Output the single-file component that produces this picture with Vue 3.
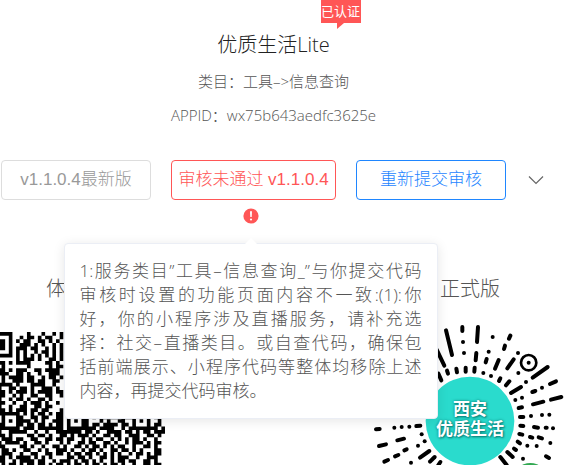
<script setup>
const reviewLines = [
  '1:服务类目”工具–信息查询_”与你提交代码',
  '审核时设置的功能页面内容不一致:(1):你',
  '好，你的小程序涉及直播服务，请补充选',
  '择：社交–直播类目。或自查代码，确保包',
  '括前端展示、小程序代码等整体均移除上述',
  '内容，再提交代码审核。'
]

const qrRows = [
  '####....#...#..#.#',
  '...#..#.##.#.##..#',
  '##.#.#.##..##.#.#.',
  '##.#..###.#.#..#.#',
  '##.#.###.##..#.#.#',
  '...#.#.#..#.##.#.#',
  '####.#.#.#.#.#.#.#',
  '.....#.###.#..##.#',
  '##.#.####....##.#.',
  '.#......#.....#.##',
  '##.#.###..##.####.',
  '###..##.#..#..###.',
  '.#.####.##..#.##.#',
  '.#..###.##.##..##.',
  '####.#...####..#..',
  '#..##.##.#..###.#.',
  '##.#.###.#.####.##',
  '##..#.#..##..##..#',
  '#..#.##.#..##.#...',
  '##..#..#.###.#..#.',
  '#..#..##..##.##...',
  '##.#.###.##.##...#',
  '######.#.#.##.#.##',
  '.#...##..##.##..##.#...##.#.##.##.####...#.##.',
  '.#.#.####.#.#..###.#.#.##...#.#..##..#.#.#..#.',
  '##...##.##.##.#.##.#...##.##.####.##.#...#.##.',
  '######.###.#######.########.####..#.########.#',
  '#..#####..#..#..#######.##.#..####.##.#.##.###',
  '##.#....##.##.#..##.#.###.#..##.##..###..##.#.',
  '.###.##..##..##.##.##..#.#.##..#.#.#.##.#..#..',
  '#.####.#..##.#...#.#..##.##..##.#..#.###.#.##.',
  '##....##.#..#..##.#..##.#.##.#.#.##..#..##.#..',
  '.##.#..##..#.#..###.#..#.##.#..##.##.#.#...##.',
  '.###..#..##..##.##.#.##.##.#.#.#.#..#.##.#.##.',
  '##.#.####.#.#.#....##.##.#..##.#.###..#..###..',
  '##..#.####.##..#.###.#.##.#.#..#.##.##..##.#..',
  '.#.##.#.##.##.#.##.#.##.#.##.#.##.#..#..##.##.'
]
const qrPath = qrRows
  .map((row, y) => [...row.matchAll(/#+/g)].map(m => `M${m.index} ${y}h${m[0].length}v1h-${m[0].length}z`).join(''))
  .join('')

// Rays of the round mini-program code: x1, y1, x2, y2
const rays = [
  [228, 60, 246, 134], [277, 50, 277, 62], [279, 95, 279, 95], [282, 128, 282, 128], [324, 50, 321, 95],
  [368, 80, 368, 80], [421, 76, 417, 85], [405, 106, 402, 116], [356, 124, 356, 124], [319, 128, 317, 150],
  [350, 146, 347, 156], [386, 149, 375, 175], [444, 128, 444, 128], [431, 147, 412, 174], [200, 118, 223, 166],
  [205, 190, 214, 210], [231, 181, 234, 190], [259, 175, 261, 186], [287, 172, 287, 184], [314, 172, 313, 184],
  [340, 188, 340, 188], [363, 197, 363, 197], [391, 204, 387, 212], [418, 213, 408, 225], [445, 188, 445, 188],
  [468, 215, 468, 215], [453, 230, 423, 248], [533, 170, 488, 202], [558, 213, 540, 221], [516, 232, 516, 232],
  [496, 242, 487, 245], [574, 260, 543, 268], [520, 274, 489, 282], [456, 262, 456, 262], [436, 269, 436, 269],
  [456, 291, 446, 293], [460, 320, 450, 320], [483, 317, 483, 317], [516, 314, 516, 314], [538, 313, 538, 313],
  [451, 346, 460, 347], [492, 350, 504, 352], [527, 352, 530, 352], [549, 354, 549, 354], [448, 371, 457, 373],
  [480, 380, 487, 382], [506, 381, 516, 384], [541, 398, 541, 398], [443, 394, 450, 399], [472, 406, 472, 406],
  [500, 407, 500, 407], [459, 445, 459, 445], [528, 438, 537, 443], [432, 415, 438, 419], [412, 425, 428, 440],
  [391, 440, 410, 464], [18, 357, 29, 356], [73, 352, 73, 352], [95, 350, 95, 350], [118, 349, 118, 349],
  [139, 347, 151, 346], [155, 372, 155, 372], [82, 390, 102, 385], [27, 407, 48, 402], [164, 393, 164, 393],
  [144, 406, 144, 406], [103, 420, 110, 417], [75, 438, 85, 434], [43, 454, 54, 449], [178, 422, 150, 442],
  [194, 440, 180, 454], [211, 455, 205, 464], [123, 457, 123, 457]
]
</script>

<template>
  <main class="page">
    <header class="head">
      <span class="tag">已认证</span>
      <h1>优质生活Lite</h1>
      <p>类目：工具–&gt;信息查询</p>
      <p>APPID：wx75b643aedfc3625e</p>
    </header>

    <section class="actions">
      <button class="btn" type="button">v1.1.0.4最新版</button>
      <div class="rejected">
        <button class="btn danger" type="button">审核未通过 v1.1.0.4</button>
        <svg class="warn" viewBox="0 0 16 16" aria-hidden="true">
          <circle cx="8" cy="8" r="7.6" fill="#ff5656" />
          <path d="M7 3.2h2L8.700 9h-1.400z" fill="#fff" />
          <circle cx="8" cy="11.500" r="1.100" fill="#fff" />
        </svg>
        <div class="popover" role="tooltip">
          <span v-for="line in reviewLines" :key="line" class="line">{{ line }}</span>
        </div>
      </div>
      <button class="btn primary" type="button">重新提交审核</button>
      <button class="more" type="button" aria-label="更多">
        <svg viewBox="0 0 16 10"><path d="M1 1.500l7 7 7-7" fill="none" stroke="#666" stroke-width="1.200" /></svg>
      </button>
    </section>

    <section class="codes">
      <figure>
        <figcaption>体验版</figcaption>
        <svg class="qr" viewBox="-3 0 49 49"><path :d="qrPath" /></svg>
      </figure>
      <figure>
        <figcaption>正式版</figcaption>
        <div class="round">
          <svg viewBox="-18 14 636 636">
            <g stroke="#000" stroke-width="12" stroke-linecap="round">
              <line v-for="(r, i) in rays" :key="i" :x1="r[0]" :y1="r[1]" :x2="r[2]" :y2="r[3]" />
            </g>
            <circle cx="476" cy="157" r="23" fill="none" stroke="#000" stroke-width="8" />
            <circle cx="476" cy="157" r="6" />
            <circle cx="300" cy="332" r="133" fill="#2adbcd" />
            <circle cx="481" cy="510" r="52" fill="#32a852" />
          </svg>
          <div class="brand"><span>西安</span><span>优质生活</span></div>
        </div>
      </figure>
    </section>
  </main>
</template>

<style>
body {
  margin: 0;
  background: #fff;
}
</style>

<style scoped>
.page {
  height: 100vh;
  overflow: hidden;
  font-family: "Open Sans", "Noto Sans CJK SC", sans-serif;
  font-weight: 300;
  color: #555;
}
.head {
  position: relative;
  margin-right: 36px;
  padding-top: 30px;
  text-align: center;
}
.head h1 {
  margin: 0 0 6px;
  font-size: 20px;
  line-height: 30px;
  font-weight: 300;
  color: #222;
}
.head p {
  margin: 0 0 4px;
  font-size: 15px;
  line-height: 30px;
}
.tag {
  position: absolute;
  top: 0;
  left: calc(50% + 47px);
  width: 40px;
  font-size: 13px;
  line-height: 23px;
  font-weight: 400;
  white-space: nowrap;
  color: #fff;
  background: #ff5656;
}
.tag::after {
  content: "";
  position: absolute;
  top: 100%;
  left: 16px;
  border-top: 6px solid #ff5656;
  border-right: 7px solid transparent;
}
.actions {
  display: flex;
  justify-content: center;
  align-items: flex-start;
  gap: 20px;
  margin: 30px 36px 0 0;
}
.btn {
  box-sizing: border-box;
  width: 150px;
  height: 40px;
  padding: 0;
  border: 1px solid #ddd;
  border-radius: 4px;
  background: #fff;
  font: 300 17px/38px "Liberation Sans", "Noto Sans CJK SC", sans-serif;
  white-space: nowrap;
  color: #999;
}
.danger {
  width: 165px;
  border-color: #ff5656;
  color: #ff5656;
}
.primary {
  border-color: #1f86ff;
  color: #1f86ff;
}
.more {
  width: 20px;
  height: 40px;
  padding: 0 2px;
  border: 0;
  background: none;
}
.more svg {
  display: block;
  width: 16px;
}
.rejected {
  position: relative;
  display: flex;
  flex-direction: column;
  align-items: center;
  gap: 8px;
}
.warn {
  width: 16px;
  height: 16px;
  margin-right: 6px;
}
.popover {
  position: absolute;
  z-index: 2;
  top: 83px;
  left: 50%;
  box-sizing: border-box;
  width: 374px;
  margin-left: -190px;
  padding: 15px;
  border: 1px solid #ebeef5;
  border-radius: 4px;
  background: #fff;
  box-shadow: 0 2px 12px rgba(0, 0, 0, 0.1);
  font-size: 17px;
  line-height: 24px;
}
.popover::before {
  content: "";
  position: absolute;
  top: -6px;
  left: 50%;
  margin-left: -6px;
  border: 6px solid transparent;
  border-top: 0;
  border-bottom-color: #fff;
}
.line {
  display: block;
  white-space: nowrap;
  text-align: justify;
  text-align-last: justify;
}
.line:last-child {
  text-align-last: left;
}
.codes {
  display: flex;
  justify-content: space-between;
  margin: 50px 7px 0 -13px;
}
figure {
  display: flex;
  flex-direction: column;
  align-items: center;
  margin: 0;
}
figcaption {
  font-size: 20px;
  line-height: 30px;
}
.qr {
  width: 178px;
  margin-top: 28px;
}
.round {
  position: relative;
  width: 212px;
  margin-top: 11px;
}
.round svg {
  display: block;
  width: 100%;
}
.brand {
  position: absolute;
  top: 84px;
  left: 0;
  display: flex;
  flex-direction: column;
  align-items: center;
  width: 100%;
  font-size: 17px;
  line-height: 20px;
  font-weight: 700;
  color: #fff;
  text-shadow: 0 0 3px #087f78, 1px 1px 2px #087f78;
}
</style>
